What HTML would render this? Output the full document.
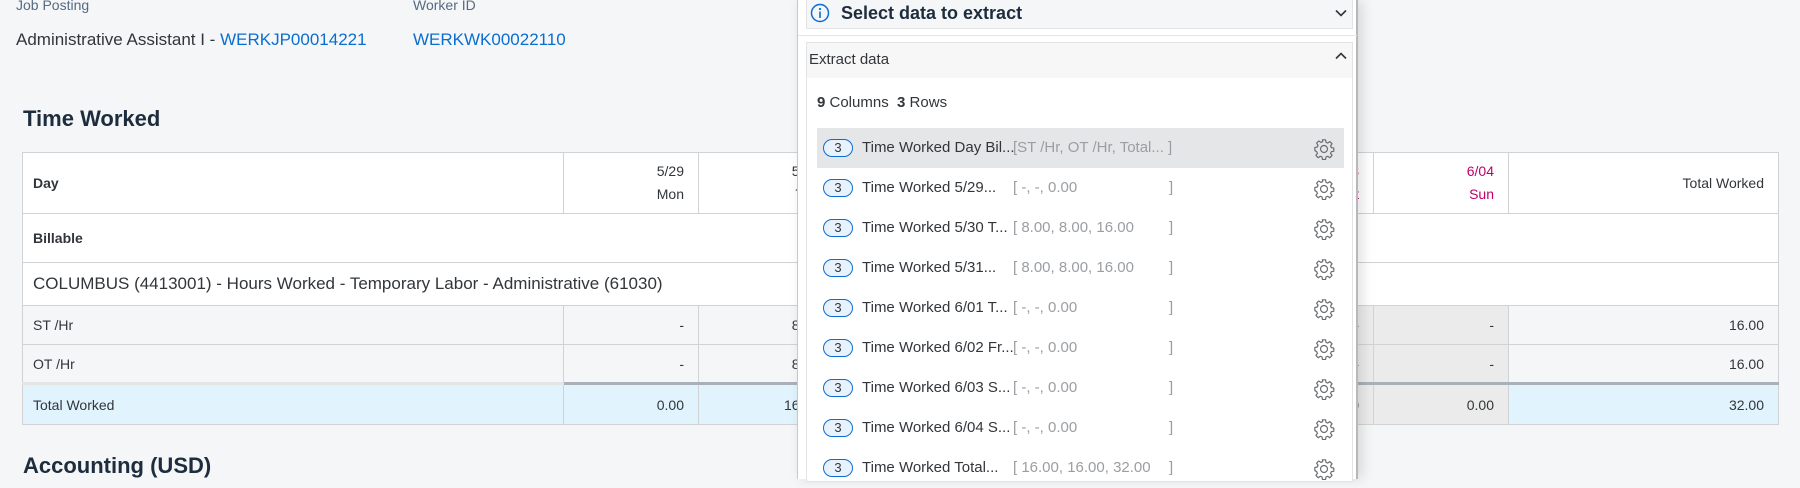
<!DOCTYPE html>
<html><head><meta charset="utf-8">
<style>
*{box-sizing:border-box;margin:0;padding:0}
body{width:1800px;height:479px;overflow:hidden;background:#f5f6f7;font-family:"Liberation Sans",sans-serif;color:#32363a;position:relative}
.a{position:absolute;white-space:nowrap}
.lbl{font-size:14px;color:#556b82}
.val{font-size:17px;color:#32363a}
.lnk{color:#0a6ed1}
h2{position:absolute;font-size:22px;font-weight:bold;color:#1d2d3e;white-space:nowrap}
table{position:absolute;left:22px;top:152px;border-collapse:collapse;table-layout:fixed;width:1756px}
td{border:1px solid #d0d2d4;font-size:14px;padding:0 14px 0 10px;text-align:right;vertical-align:middle}
td.l{text-align:left}
.w{background:#fff}
.g{background:#f5f6f7}
.we{background:#ebebeb}
.t td{background:#e1f3fd}
.t td.we{background:#ebebeb}
.pink{color:#c0006a}
.thick td{border-top:3px solid #a9b0b7}
.panel{position:absolute;left:797px;top:0;width:561px;height:479px;background:#fff;border-left:1px solid #c8c8c8;border-right:2px solid #b8b8b8;box-shadow:4px 0 12px rgba(0,0,0,0.12)}
.box1{position:absolute;left:8px;top:-1px;width:547px;height:30px;background:#f5f6f7;border:1px solid #e2e3e4}
.sep{position:absolute;left:0;top:35px;width:559px;height:1px;background:#e5e5e5}
.box2{position:absolute;left:8px;top:42px;width:547px;height:440px;border:1px solid #e2e3e4;background:#fff}
.hd2{position:absolute;left:0;top:0;width:545px;height:35px;background:#f7f7f7}
.row{position:absolute;left:10px;width:527px;height:40px}
.row.sel{background:#e5e6e8}
.badge{position:absolute;left:6px;top:11px;width:30px;height:18px;border:1px solid #0a6ed1;border-radius:9px;background:#e8f2fc;font-size:13px;text-align:center;line-height:16px;color:#32363a}
.nm{position:absolute;left:45px;top:11px;font-size:15px;color:#32363a}
.vv{position:absolute;left:196px;top:11px;font-size:15px;color:#9a9ea3}
.cb{position:absolute;left:352px;top:11px;font-size:15px;color:#9a9ea3}
.gear{position:absolute;left:496px;top:10px}
</style></head><body>
<div class="a lbl" style="left:16px;top:-3px">Job Posting</div>
<div class="a lbl" style="left:413px;top:-3px">Worker ID</div>
<div class="a val" style="left:16px;top:30px">Administrative Assistant I - <span class="lnk">WERKJP00014221</span></div>
<div class="a val lnk" style="left:413px;top:30px">WERKWK00022110</div>
<h2 style="left:23px;top:106px">Time Worked</h2>
<h2 style="left:23px;top:453px">Accounting (USD)</h2>

<table>
<colgroup><col style="width:541px"><col style="width:135px"><col style="width:135px"><col style="width:135px"><col style="width:135px"><col style="width:135px"><col style="width:135px"><col style="width:135px"><col style="width:270px"></colgroup>
<tr class="w" style="height:61px"><td class="l" style="font-weight:bold">Day</td><td style="line-height:23px">5/29<br>Mon</td><td style="line-height:23px">5/30<br>Tue</td><td style="line-height:23px">5/31<br>Wed</td><td style="line-height:23px">6/01<br>Thu</td><td style="line-height:23px">6/02<br>Fri</td><td class="pink" style="line-height:23px">6/03<br>Sat</td><td class="pink" style="line-height:23px">6/04<br>Sun</td><td style="font-size:14px">Total Worked</td></tr>
<tr class="w" style="height:49px"><td class="l" style="font-weight:bold" colspan="9">Billable</td></tr>
<tr class="w" style="height:43px"><td class="l" style="font-size:17px" colspan="9">COLUMBUS (4413001) - Hours Worked - Temporary Labor - Administrative (61030)</td></tr>
<tr class="g" style="height:39px"><td class="l">ST /Hr</td><td>-</td><td>8.00</td><td>8.00</td><td>-</td><td>-</td><td class="we">-</td><td class="we">-</td><td>16.00</td></tr>
<tr class="g" style="height:39px"><td class="l">OT /Hr</td><td>-</td><td>8.00</td><td>8.00</td><td>-</td><td>-</td><td class="we">-</td><td class="we">-</td><td>16.00</td></tr>
<tr class="t thick" style="height:41px"><td class="l" style="border-top:3px solid #e5e5e5">Total Worked</td><td>0.00</td><td>16.00</td><td>16.00</td><td>0.00</td><td>0.00</td><td class="we">0.00</td><td class="we">0.00</td><td>32.00</td></tr>
</table>

<div class="panel">
 <div class="box1">
  <svg class="a" style="left:3px;top:3px" width="20" height="20" viewBox="0 0 20 20"><circle cx="10" cy="10" r="8.5" fill="none" stroke="#0a6ed1" stroke-width="1.5"/><circle cx="10" cy="6" r="1.1" fill="#0a6ed1"/><rect x="9.2" y="8.5" width="1.6" height="6.5" fill="#0a6ed1"/></svg>
  <div class="a" style="left:34px;top:3px;font-size:18px;font-weight:bold;color:#1d2d3e">Select data to extract</div>
  <svg class="a" style="left:527px;top:6px" width="14" height="14" viewBox="0 0 14 14"><path d="M2 4.5 L7 9.5 L12 4.5" fill="none" stroke="#32363a" stroke-width="1.6"/></svg>
 </div>
 <div class="sep"></div>
 <div class="box2">
  <div class="hd2">
   <div class="a" style="left:2px;top:8px;font-size:15px;color:#32363a">Extract data</div>
   <svg class="a" style="left:527px;top:6px" width="14" height="14" viewBox="0 0 14 14"><path d="M2 9.5 L7 4.5 L12 9.5" fill="none" stroke="#32363a" stroke-width="1.6"/></svg>
  </div>
  <div class="a" style="left:10px;top:51px;font-size:15px"><b>9</b> Columns&nbsp; <b>3</b> Rows</div>
  <div class="row sel" style="top:85px"><div class="badge">3</div><div class="nm">Time Worked Day Bil...</div><div class="vv">[ST /Hr, OT /Hr, Total... ]</div><svg class="gear" width="22" height="22" viewBox="0 0 24 24"><use href="#g"/></svg></div>
  <div class="row" style="top:125px"><div class="badge">3</div><div class="nm">Time Worked 5/29...</div><div class="vv">[ -, -, 0.00</div><div class="cb">]</div><svg class="gear" width="22" height="22" viewBox="0 0 24 24"><use href="#g"/></svg></div>
  <div class="row" style="top:165px"><div class="badge">3</div><div class="nm">Time Worked 5/30 T...</div><div class="vv">[ 8.00, 8.00, 16.00</div><div class="cb">]</div><svg class="gear" width="22" height="22" viewBox="0 0 24 24"><use href="#g"/></svg></div>
  <div class="row" style="top:205px"><div class="badge">3</div><div class="nm">Time Worked 5/31...</div><div class="vv">[ 8.00, 8.00, 16.00</div><div class="cb">]</div><svg class="gear" width="22" height="22" viewBox="0 0 24 24"><use href="#g"/></svg></div>
  <div class="row" style="top:245px"><div class="badge">3</div><div class="nm">Time Worked 6/01 T...</div><div class="vv">[ -, -, 0.00</div><div class="cb">]</div><svg class="gear" width="22" height="22" viewBox="0 0 24 24"><use href="#g"/></svg></div>
  <div class="row" style="top:285px"><div class="badge">3</div><div class="nm">Time Worked 6/02 Fr...</div><div class="vv">[ -, -, 0.00</div><div class="cb">]</div><svg class="gear" width="22" height="22" viewBox="0 0 24 24"><use href="#g"/></svg></div>
  <div class="row" style="top:325px"><div class="badge">3</div><div class="nm">Time Worked 6/03 S...</div><div class="vv">[ -, -, 0.00</div><div class="cb">]</div><svg class="gear" width="22" height="22" viewBox="0 0 24 24"><use href="#g"/></svg></div>
  <div class="row" style="top:365px"><div class="badge">3</div><div class="nm">Time Worked 6/04 S...</div><div class="vv">[ -, -, 0.00</div><div class="cb">]</div><svg class="gear" width="22" height="22" viewBox="0 0 24 24"><use href="#g"/></svg></div>
  <div class="row" style="top:405px"><div class="badge">3</div><div class="nm">Time Worked Total...</div><div class="vv">[ 16.00, 16.00, 32.00</div><div class="cb">]</div><svg class="gear" width="22" height="22" viewBox="0 0 24 24"><use href="#g"/></svg></div>
 </div>
</div>
<svg width="0" height="0" style="position:absolute"><defs><g id="g"><path d="M10.3 2h3.4l.5 2.7 1.9.8 2.3-1.6 2.4 2.4-1.6 2.3.8 1.9 2.7.5v3.4l-2.7.5-.8 1.9 1.6 2.3-2.4 2.4-2.3-1.6-1.9.8-.5 2.7h-3.4l-.5-2.7-1.9-.8-2.3 1.6-2.4-2.4 1.6-2.3-.8-1.9L2 13.7v-3.4l2.7-.5.8-1.9-1.6-2.3 2.4-2.4 2.3 1.6 1.9-.8z" fill="none" stroke="#6a6d70" stroke-width="1.3" stroke-linejoin="round"/><circle cx="12" cy="12" r="3.8" fill="none" stroke="#6a6d70" stroke-width="1.3"/></g></defs></svg>
</body></html>
